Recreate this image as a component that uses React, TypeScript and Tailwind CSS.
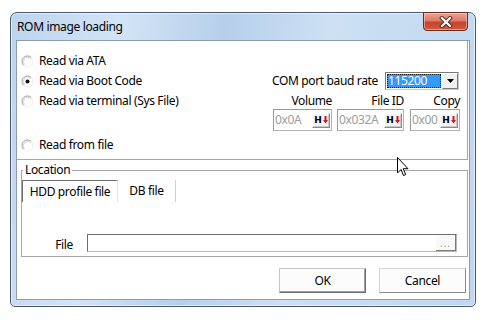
import React from "react";

function Radio({ checked }: { checked?: boolean }) {
  return (
    <svg width="13" height="13" viewBox="0 0 13 13" className="shrink-0">
      <circle cx="6.5" cy="6.5" r="5.5" fill="#ffffff" />
      <path d="M2.6 10.4 A5.5 5.5 0 0 1 10.4 2.6" stroke="#9a9a9a" fill="none" strokeWidth="1" />
      <path d="M3.4 9.6 A4.4 4.4 0 0 1 9.6 3.4" stroke="#d4d4d4" fill="none" strokeWidth="1" />
      <path d="M10.4 2.6 A5.5 5.5 0 0 1 2.6 10.4" stroke="#eeeeee" fill="none" strokeWidth="1" />
      {checked && <circle cx="6.5" cy="6.5" r="2" fill="#111111" />}
    </svg>
  );
}

function RadioRow({ label, checked }: { label: string; checked?: boolean }) {
  return (
    <div className="flex items-center h-[20px] gap-[5px] whitespace-nowrap">
      <Radio checked={checked} />
      <span>{label}</span>
    </div>
  );
}

function HButton() {
  return (
    <div className="w-[18px] h-[15px] flex items-center justify-center gap-[1px] bg-[#f3f3f3] border border-t-[#ffffff] border-l-[#ffffff] border-r-[#8a8a8a] border-b-[#8a8a8a] shadow-[inset_-1px_-1px_0_#c8c8c8]">
      <span className="text-[9px] leading-none font-bold text-black tracking-normal font-['DejaVu_Sans',sans-serif]">H</span>
      <svg width="5" height="8" viewBox="0 0 5 8">
        <rect x="1.5" y="0" width="2" height="4" fill="#d01818" />
        <path d="M0 4 L5 4 L2.5 7.5 Z" fill="#d01818" />
      </svg>
    </div>
  );
}

function HexBox({ value, width }: { value: string; width: string }) {
  return (
    <div className={`${width} h-[22px] flex items-center justify-between pl-[1px] pr-[1px] border border-[#b4b4b4] border-t-[#9a9a9a] border-l-[#9a9a9a] bg-white`}>
      <span className="text-[#9c9c9c]">{value}</span>
      <HButton />
    </div>
  );
}

export default function App() {
  return (
    <div className="w-[494px] h-[320px] bg-white overflow-hidden relative pt-[12px] pl-[10px] text-[12px] leading-[16px] tracking-[-0.35px] text-black font-['Segoe_UI','Noto_Sans',sans-serif]">
      <div className="w-[466px] h-[295px] rounded-t-[7px] rounded-b-[5px] border border-[#4a5868] bg-[linear-gradient(100deg,#bdd4ed_0%,#d3e4f6_22%,#b6cfea_42%,#cde0f4_62%,#c0d7ef_100%)] flex flex-col shadow-[inset_0_0_0_1px_rgba(255,255,255,0.55)]">
        {/* title bar */}
        <div className="h-[27px] flex items-start justify-between pl-[6px]">
          <span className="mt-[6px] text-[12px] leading-[16px] text-black whitespace-nowrap">ROM image loading</span>
          <div className="mt-[-1px] mr-[7px] w-[45px] h-[19px] rounded-b-[4px] border border-[#6a2a20] bg-[linear-gradient(180deg,#eba596_0%,#dc7a66_45%,#c7442e_55%,#cf5a3f_100%)] flex items-center justify-center shadow-[inset_0_0_0_1px_rgba(255,220,210,0.5)]">
            <svg width="14" height="12" viewBox="0 0 14 12">
              <path d="M3 2 L11 10 M11 2 L3 10" stroke="#4a2a24" strokeWidth="4" strokeLinecap="square" />
              <path d="M3 2 L11 10 M11 2 L3 10" stroke="#ffffff" strokeWidth="2.2" strokeLinecap="square" />
            </svg>
          </div>
        </div>
        {/* client */}
        <div className="flex-1 px-[5px] pb-[6px] flex">
          <div className="flex-1 bg-white border border-[#8d9db0] flex flex-col">
            {/* top panel */}
            <div className="h-[119px] mr-[1px] border-r border-b border-[#a6a6a6] flex">
              <div className="pl-[4px] pt-[10px] flex flex-col">
                <RadioRow label="Read via ATA" />
                <RadioRow label="Read via Boot Code" checked />
                <RadioRow label="Read via terminal (Sys File)" />
                <div className="h-[24px]" />
                <RadioRow label="Read from file" />
              </div>
              <div className="ml-auto pr-[8px] pt-[31px] w-[194px] flex flex-col">
                <div className="flex items-center justify-end h-[18px] whitespace-nowrap">
                  <span>COM port baud rate</span>
                  <div className="ml-[7px] w-[74px] h-[18px] shrink-0 flex items-stretch border border-[#7a7a7a] border-r-[#c8c8c8] border-b-[#c8c8c8] bg-white">
                    <div className="flex-1 p-[1px]">
                      <div className="h-full bg-[#3399ff] text-white leading-[14px] pl-[1px] outline outline-1 outline-dotted outline-[#1a1a1a] outline-offset-[-1px]">115200</div>
                    </div>
                    <div className="w-[16px] bg-[#f0f0f0] border-l border-t border-l-white border-t-white border-r border-b border-r-[#7a7a7a] border-b-[#7a7a7a] flex items-center justify-center">
                      <svg width="7" height="4" viewBox="0 0 7 4">
                        <path d="M0 0 L7 0 L3.5 4 Z" fill="#000" />
                      </svg>
                    </div>
                  </div>
                </div>
                <div className="flex mt-[3px] whitespace-nowrap">
                  <div className="w-[59px] flex flex-col">
                    <div className="text-right h-[16px]">Volume</div>
                    <HexBox value="0x0A" width="w-[59px]" />
                  </div>
                  <div className="ml-[5px] w-[67px] flex flex-col">
                    <div className="text-right h-[16px]">File ID</div>
                    <HexBox value="0x032A" width="w-[67px]" />
                  </div>
                  <div className="ml-[6px] w-[50px] flex flex-col">
                    <div className="text-right h-[16px]">Copy</div>
                    <HexBox value="0x00" width="w-[50px]" />
                  </div>
                </div>
              </div>
            </div>
            {/* location group */}
            <fieldset className="mt-[2px] ml-[4px] mr-[1px] border border-[#a6a6a6] p-0 min-w-0">
              <legend className="ml-[1px] px-[2px] leading-[16px]">Location</legend>
              <div className="mt-[2px] flex h-[22px] whitespace-nowrap">
                <div className="w-[96px] h-[22px] flex items-center justify-center border-t border-l border-[#6e6e6e] border-r border-r-[#e4e4e4]">
                  HDD profile file
                </div>
                <div className="w-[58px] h-[22px] flex items-center justify-center border-r border-[#cfcfcf]">DB file</div>
              </div>
              <div className="mt-[32px] mb-[4px] flex items-end">
                <div className="w-[65px] text-right pr-[14px] leading-[14px]">File</div>
                <div className="flex-1 mr-[10px] h-[18px] border border-[#b8b8b8] border-t-[#6e6e6e] border-l-[#6e6e6e] flex justify-end items-center bg-white">
                  <div className="w-[20px] h-[16px] bg-[#f8f8f8] border-r border-b border-[#7a7a7a] flex items-center justify-center text-[#a0a0a0] text-[10px] leading-none tracking-[1px]">
                    ...
                  </div>
                </div>
              </div>
            </fieldset>
            {/* buttons */}
            <div className="mt-[11px] flex justify-end gap-[13px] pr-[3px]">
              <button className="w-[87px] h-[25px] bg-[#fcfcfc] border border-[#c6c6c6] border-r-[#6e6e6e] border-b-[#6e6e6e] shadow-[inset_-1px_-1px_0_#a0a0a0] text-black">
                OK
              </button>
              <button className="w-[87px] h-[25px] bg-[#fcfcfc] border border-[#d4d4d4] border-r-[#8a8a8a] border-b-[#8a8a8a] text-black">
                Cancel
              </button>
            </div>
          </div>
        </div>
      </div>
      {/* mouse cursor */}
      <svg className="absolute left-[397px] top-[157px]" width="12" height="20" viewBox="0 0 12 20">
        <path d="M0.5 0.5 L0.5 16 L4 12.5 L6.5 18.5 L8.7 17.6 L6.2 11.7 L11 11.7 Z" fill="#ffffff" stroke="#000000" strokeWidth="1" strokeLinejoin="miter" />
      </svg>
    </div>
  );
}
